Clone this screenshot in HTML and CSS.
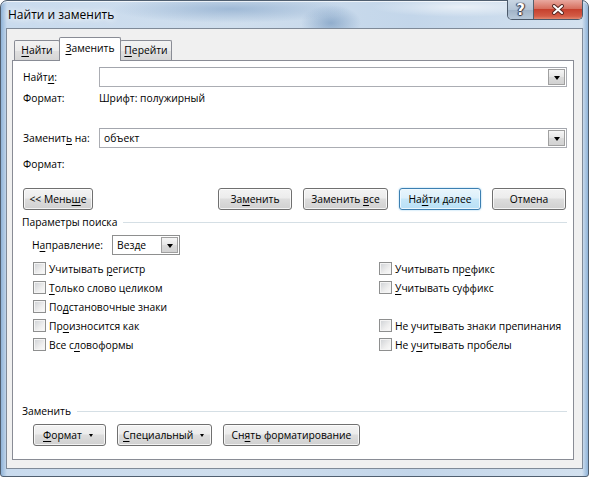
FILE: index.html
```html
<!DOCTYPE html>
<html lang="ru">
<head>
	<meta charset="UTF-8">
	<title>Найти и заменить</title>
	<link rel="stylesheet" href="styles.css">
</head>
<body>
	<div class="window">
		<div class="titlebar">
			<span class="caption">Найти и заменить</span>
			<div class="sysbtns">
				<span class="help">?</span>
				<span class="close">
					<svg width="14" height="11" viewBox="0 0 14 11">
						<path d="M3 2 L11 9 M11 2 L3 9" stroke="#5a2a24" stroke-width="4" stroke-linecap="round"/>
						<path d="M3 2 L11 9 M11 2 L3 9" stroke="#fff" stroke-width="2" stroke-linecap="round"/>
					</svg>
				</span>
			</div>
		</div>

		<div class="client">
			<div class="tabs">
				<div class="tab t1"><span><u>Н</u>айти</span></div>
				<div class="tab t2 active"><span><u>З</u>аменить</span></div>
				<div class="tab t3"><span><u>П</u>ерейти</span></div>
			</div>

			<div class="panel">
				<div class="field find">
					<span class="lbl">Найт<u>и</u>:</span>
					<div class="combo">
						<span class="val"></span>
						<span class="drop"><i class="arrow"></i></span>
					</div>
				</div>
				<div class="fmt fmt1">
					<span class="lbl">Формат:</span>
					<span>Шрифт: полужирный</span>
				</div>

				<div class="field repl">
					<span class="lbl">Заменит<u>ь</u> на:</span>
					<div class="combo">
						<span class="val">объект</span>
						<span class="drop"><i class="arrow"></i></span>
					</div>
				</div>
				<div class="fmt fmt2">
					<span class="lbl">Формат:</span>
				</div>

				<div class="actions">
					<button class="btn less"><span>&lt;&lt; Мень<u>ш</u>е</span></button>
					<div class="right">
						<button class="btn b-repl"><span>За<u>м</u>енить</span></button>
						<button class="btn b-all"><span>Заменить <u>в</u>се</span></button>
						<button class="btn default b-next"><span>На<u>й</u>ти далее</span></button>
						<button class="btn b-cancel"><span>Отмена</span></button>
					</div>
				</div>

				<div class="group opts-head"><span>Параметры поиска</span></div>

				<div class="direction">
					<span class="lbl">Н<u>а</u>правление:</span>
					<div class="select">
						<span class="val">Везде</span>
						<span class="drop"><i class="arrow"></i></span>
					</div>
				</div>

				<div class="options">
					<label class="check"><i class="box"></i><span>Учитывать <u>р</u>егистр</span></label>
					<label class="check"><i class="box"></i><span>Учитывать пр<u>е</u>фикс</span></label>
					<label class="check"><i class="box"></i><span><u>Т</u>олько слово целиком</span></label>
					<label class="check"><i class="box"></i><span><u>У</u>читывать суффикс</span></label>
					<label class="check"><i class="box"></i><span>По<u>д</u>становочные знаки</span></label>
					<span></span>
					<label class="check"><i class="box"></i><span>Пр<u>о</u>износится как</span></label>
					<label class="check"><i class="box"></i><span>Не учит<u>ы</u>вать знаки препинания</span></label>
					<label class="check"><i class="box"></i><span>Все с<u>л</u>овоформы</span></label>
					<label class="check"><i class="box"></i><span>Не у<u>ч</u>итывать пробелы</span></label>
				</div>

				<div class="group repl-head"><span>Заменить</span></div>

				<div class="tools">
					<button class="btn menu b-fmt"><span><u>Ф</u>ормат</span><i class="tri"></i></button>
					<button class="btn menu b-spec"><span><u>С</u>пециальный</span><i class="tri"></i></button>
					<button class="btn b-clear"><span>Сн<u>я</u>ть форматирование</span></button>
				</div>
			</div>
		</div>
	</div>
</body>
</html>
```

FILE: styles.css
```css
* {
	margin: 0;
	padding: 0;
	box-sizing: border-box;
}
body {
	width: 589px;
	height: 477px;
	overflow: hidden;
	font: 10.3px/16px "Open Sans", "Noto Sans", sans-serif;
	color: #000;
	background: #fff;
}
u {
	text-decoration: underline;
	text-underline-offset: 2px;
}
span,
label {
	white-space: nowrap;
}

/* окно с рамкой aero */
.window {
	width: 589px;
	height: 477px;
	border: 1px solid #505f70;
	border-radius: 7px 7px 3px 3px;
	padding: 0 5px 7px 5px;
	display: flex;
	flex-direction: column;
	background:
		radial-gradient(ellipse 120px 14px at 230px 8px, rgba(120,155,195,.55), transparent),
		radial-gradient(ellipse 30px 18px at 330px 22px, rgba(90,130,175,.5), transparent),
		radial-gradient(ellipse 90px 10px at 460px 6px, rgba(255,255,255,.6), transparent),
		linear-gradient(90deg, #8fb3d8 0, #c9dbee 6px, #cfdeed 40%, #c3d6ea 70%, #d3e1ef calc(100% - 6px), #8fb3d8 100%);
	box-shadow: inset 0 1px 0 rgba(255,255,255,.7);
}
.titlebar {
	height: 27px;
	display: flex;
	justify-content: space-between;
}
.caption {
	margin: 6px 0 0 2px;
	font-size: 12px;
	text-shadow: 0 0 6px #fff, 0 0 10px #fff;
}
.sysbtns {
	display: flex;
	height: 20px;
	margin-top: -1px;
	border: 1px solid #4c5a6b;
	border-top: none;
	border-radius: 0 0 5px 5px;
	overflow: hidden;
}
.help {
	width: 26px;
	display: flex;
	justify-content: center;
	align-items: center;
	font: bold 15px "DejaVu Sans", sans-serif;
	color: #fff;
	text-shadow: 0 0 1px #334, 1px 0 1px #334, -1px 0 1px #334, 0 1px 1px #334;
	background: linear-gradient(#c9d6e3, #b4c5d6 50%, #9fb2c6 51%, #b7c8d9);
	border-right: 1px solid #56606c;
}
.close {
	width: 48px;
	display: flex;
	justify-content: center;
	align-items: center;
	background: linear-gradient(#e9a99f, #d7705f 45%, #c6412e 50%, #d35b45 85%, #e2876f);
}

.client {
	flex: 1;
	border: 1px solid #7f8a98;
	background: #f0f0f0;
	padding: 8px 8px 8px 5px;
	display: flex;
	flex-direction: column;
}

/* вкладки */
.tabs {
	display: flex;
	height: 23px;
	padding-left: 2px;
	position: relative;
	z-index: 1;
}
.tab {
	height: 20px;
	margin-top: 3px;
	border: 1px solid #898c95;
	border-bottom: none;
	border-radius: 2px 2px 0 0;
	text-align: center;
	line-height: 19px;
	background: linear-gradient(#f3f3f3, #ebebeb 50%, #e0e0e0 51%, #d6d6d6);
}
.tab.t1 {
	width: 46px;
}
.tab.t2 {
	width: 62px;
	margin-left: -1px;
}
.tab.t3 {
	width: 52px;
	margin-left: -1px;
}
.tab.active {
	height: 24px;
	margin-top: 0;
	line-height: 21px;
	background: #fff;
	position: relative;
	z-index: 2;
}

.panel {
	flex: 1;
	background: #fff;
	border: 1px solid #898c95;
	padding: 6px 6px 13px 10px;
	display: flex;
	flex-direction: column;
}

.lbl {
	flex: none;
}
.field {
	display: flex;
	align-items: center;
	height: 20px;
}
.field .lbl,
.fmt .lbl {
	width: 76px;
}
.combo {
	flex: 1;
	height: 20px;
	border: 1px solid #abadb3;
	border-top-color: #a3a6ad;
	display: flex;
	align-items: center;
	justify-content: space-between;
	padding: 0 1px 0 4px;
}
.drop {
	width: 17px;
	height: 16px;
	border: 1px solid #a0a0a0;
	background: linear-gradient(#f6f6f6, #e6e6e6 50%, #dadada 51%, #d2d2d2);
	display: flex;
	justify-content: center;
	align-items: center;
}
.arrow {
	width: 1px;
	height: 0;
	border-left: 3px solid transparent;
	border-right: 3px solid transparent;
	border-top: 4px solid #000;
	margin-top: 1px;
}
.fmt {
	display: flex;
	height: 16px;
}
.fmt1 {
	margin-top: 3px;
}
.repl {
	margin-top: 22px;
}
.fmt2 {
	margin-top: 8px;
}

/* кнопки */
.btn {
	font: inherit;
	color: #000;
	height: 22px;
	border: 1px solid #707070;
	border-radius: 3px;
	background: linear-gradient(#f3f3f3, #ececec 45%, #dddddd 50%, #d0d0d0);
	box-shadow: inset 0 0 0 1px rgba(255,255,255,.75);
	display: flex;
	align-items: center;
	justify-content: center;
}
.btn.default {
	border-color: #3c7fb1;
	background: linear-gradient(#e8f5fc, #dcf0fb 45%, #c6e7f8 50%, #b8e0f6);
	box-shadow: inset 0 0 0 1px rgba(240,250,255,.9), 0 0 2px #8ccbef;
}
.actions {
	display: flex;
	justify-content: space-between;
	margin-top: 16px;
	padding-right: 1px;
}
.less {
	width: 70px;
}
.right {
	display: flex;
	gap: 11px;
}
.b-repl {
	width: 74px;
}
.b-all {
	width: 85px;
}
.b-next {
	width: 82px;
}
.b-cancel {
	width: 74px;
}

/* заголовки групп */
.group {
	display: flex;
	align-items: center;
	height: 14px;
	margin-left: -1px;
}
.group::after {
	content: "";
	flex: 1;
	height: 1px;
	margin-left: 6px;
	background: #d5dfe5;
}
.opts-head {
	margin-top: 5px;
}
.repl-head {
	margin-top: auto;
}

.direction {
	display: flex;
	align-items: center;
	margin: 6px 0 0 9px;
}
.direction .lbl {
	width: 80px;
}
.select {
	width: 68px;
	height: 20px;
	border: 1px solid #8e8f8f;
	display: flex;
	align-items: center;
	justify-content: space-between;
	padding: 0 1px 0 4px;
}

/* флажки */
.options {
	display: grid;
	grid-template-columns: 346px 1fr;
	grid-auto-rows: 19px;
	margin: 4px 0 0 10px;
}
.options .check:nth-child(2),
.options .check:nth-child(4) {
	grid-column: 2;
}
.check {
	display: flex;
	align-items: center;
}
.box {
	flex: none;
	width: 13px;
	height: 13px;
	margin-right: 3px;
	border: 1px solid #8e8f8f;
	background: linear-gradient(135deg, #cdd0d4, #eeeeee 60%, #fbfbfb);
	box-shadow: inset 0 0 0 1px #f4f4f4;
}

.tools {
	display: flex;
	gap: 11px;
	margin: 6px 0 0 10px;
}
.menu {
	justify-content: space-between;
}
.b-fmt {
	width: 73px;
	padding: 0 12px 0 9px;
}
.b-spec {
	width: 95px;
	padding: 0 7px 0 5px;
}
.b-clear {
	width: 137px;
}
.tri {
	flex: none;
	width: 1px;
	height: 0;
	border-left: 2px solid transparent;
	border-right: 2px solid transparent;
	border-top: 3px solid #000;
}
```
